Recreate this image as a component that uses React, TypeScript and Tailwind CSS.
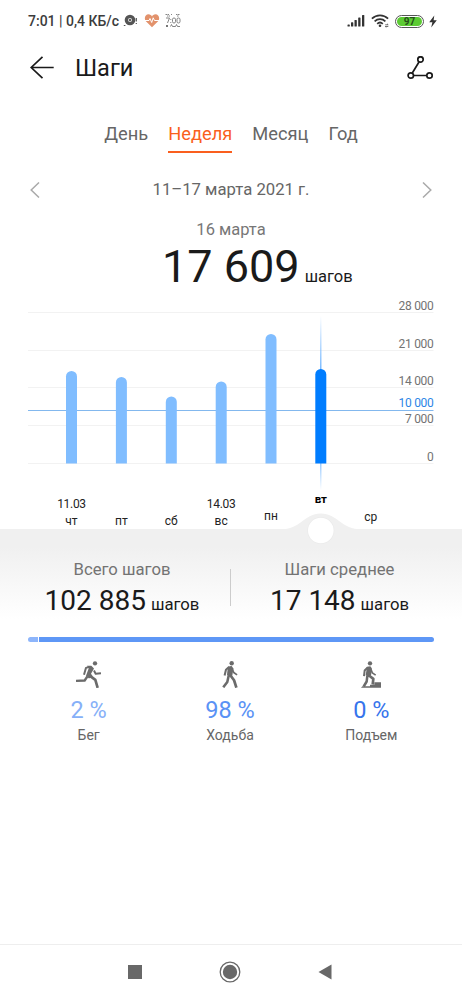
import React, { useState } from 'react';

interface DayItem {
  x: number;
  top: number | null;
  label: string;
  labelY: number;
  date?: string;
}

interface AxisItem {
  text: string;
  line: number;
  baseline: number;
}

const tabs = ['День', 'Неделя', 'Месяц', 'Год'];

// Chart coordinates are local to the 462x237 svg
const days: DayItem[] = [
  { x: 71.5, top: 79, label: 'чт', labelY: 232.5, date: '11.03' },
  { x: 121.4, top: 85, label: 'пт', labelY: 232.5 },
  { x: 171.3, top: 104.5, label: 'сб', labelY: 232.5 },
  { x: 221.2, top: 89.5, label: 'вс', labelY: 232.5, date: '14.03' },
  { x: 271, top: 42, label: 'пн', labelY: 228 },
  { x: 320.8, top: 77, label: 'вт', labelY: 211 },
  { x: 370.7, top: null, label: 'ср', labelY: 229 },
];

const axis: AxisItem[] = [
  { text: '28 000', line: 20.5, baseline: 18 },
  { text: '21 000', line: 58.5, baseline: 55.5 },
  { text: '14 000', line: 95.5, baseline: 93 },
  { text: '7 000', line: 133.5, baseline: 131 },
  { text: '0', line: 171.5, baseline: 169 },
];

const StatusBar: React.FC = () => (
  <div className="flex h-10 items-center pt-0.5 pl-[28px] pr-[25px] text-[#3c3c3c]">
    <span className="text-[14px] font-medium leading-5 whitespace-pre">7:01 | 0,4 КБ/с</span>
    <svg className="ml-1 h-4 w-4" viewBox="0 0 16 16">
      <circle cx="7" cy="7" r="5.3" fill="#555" />
      <circle cx="7" cy="7" r="2" fill="#ddd" />
      <circle cx="7" cy="7" r="1" fill="#333" />
      <path d="M.8 12.5h1.6M13.3 5v3.5M13.3 10v1" stroke="#555" strokeWidth="1.2" />
    </svg>
    <svg className="ml-[5px] h-4 w-4" viewBox="0 0 16 16">
      <path d="M8 14.3 1.9 8.2C-.5 5.2 1.4 1.3 4.5 1.3 6.2 1.3 7.4 2.3 8 3.5 8.6 2.3 9.8 1.3 11.5 1.3c3.1 0 5 3.9 2.6 6.900z" fill="#e2926c" />
      <path d="M1 7.5h4l1-2 1.7 4 1.5-4.7 1.3 2.7H15" fill="none" stroke="#fff" />
    </svg>
    <svg className="ml-[5px] h-4 w-4" viewBox="0 0 16 16" fill="none" stroke="#777" strokeWidth=".9">
      <path d="M.5 1.5h4M6 1.5h1M11 1.5h4M2 3h3M12 3h2" strokeDasharray="1.5 .5" />
      <path d="M1 5h3.5L2.5 10M5.8 6v1M5.8 9v1" />
      <rect x="7.5" y="5" width="3" height="5" rx="1.4" />
      <rect x="12" y="5" width="3" height="5" rx="1.4" />
      <path d="M1 13h2" strokeWidth="2" />
      <path d="M5.5 13.5l1-2 1 2h3l1-2 1 2h2.5" />
    </svg>
    <div className="ml-auto flex items-center">
      <svg className="h-4 w-[18px]" viewBox="0 0 18 16" fill="#333">
        <rect x=".5" y="11.5" width="2.3" height="2" rx=".6" />
        <rect x="4" y="9.3" width="2.3" height="4.2" rx=".6" />
        <rect x="7.5" y="7" width="2.3" height="6.5" rx=".6" />
        <rect x="11.2" y="4.5" width="2.3" height="9" rx=".6" />
        <rect x="15" y="2" width="2.3" height="11.5" rx=".6" />
      </svg>
      <svg className="ml-[6px] h-4 w-[19px]" viewBox="0 0 19 16" fill="none" stroke="#333" strokeWidth="1.7">
        <path d="M.9 5.6c4.6-4.4 11.6-4.4 16.2 0" />
        <path d="M3.6 8.3c3.1-3 7.7-3 10.8 0" />
        <path d="M6.2 10.8c1.6-1.5 4-1.5 5.6 0" />
        <circle cx="9" cy="12.8" r="1.3" fill="#333" stroke="none" />
        <path d="M14.2 11.8h3l-1-.9M17.3 13.5h-3l1 .9" strokeWidth=".7" />
      </svg>
      <div className="ml-[5px] flex h-[13px] w-[29px] rounded-full border border-[#555] p-px">
        <div className="flex flex-1 items-center justify-center rounded-full bg-[#5ccb33] pt-px text-[10px] font-bold leading-none text-[#24501a]">
          97
        </div>
      </div>
      <svg className="ml-[5px] h-[13px] w-2" viewBox="0 0 8 13" fill="#333">
        <path d="M5.3.4.2 7.3h3.2L2.2 12.6 7.8 5.3H4.6z" />
      </svg>
    </div>
  </div>
);

const StepsChart: React.FC = () => (
  <svg className="relative block h-[237px] w-[462px] shrink-0 overflow-visible text-[12px]" viewBox="0 0 462 237">
    <defs>
      <linearGradient id="marker" x1="0" y1="0" x2="0" y2="1">
        <stop offset="0" stopColor="#7dbcff" stopOpacity="0" />
        <stop offset=".3" stopColor="#7dbcff" />
        <stop offset=".8" stopColor="#7dbcff" />
        <stop offset="1" stopColor="#7dbcff" stopOpacity="0" />
      </linearGradient>
    </defs>
    {axis.map((item) => (
      <g key={item.text}>
        <path d={`M28 ${item.line}H433.5`} stroke="#f2f2f2" />
        <text x="433.5" y={item.baseline} textAnchor="end" fill="#737373" className="tracking-[-0.3px]">
          {item.text}
        </text>
      </g>
    ))}
    <path d="M28 118.500H433.500" stroke="#83b8ee" />
    <text x="433.5" y="115" textAnchor="end" fill="#2c85e6" className="tracking-[-0.3px]">
      10 000
    </text>
    <rect x="320" y="24" width="1.5" height="174" fill="url(#marker)" />
    {days.map((day) => (
      <g key={day.label}>
        {day.top !== null && (
          <path
            d={`M${day.x - 5.5} 171.5V${day.top + 5.5}a5.5 5.5 0 0 1 11 0V171.5z`}
            fill={day.label === 'вт' ? '#007dff' : '#80bdff'}
          />
        )}
        {day.date && (
          <text x={day.x} y="215.5" textAnchor="middle" fill="#222" className="tracking-[-0.3px]">
            {day.date}
          </text>
        )}
        <text
          x={day.x}
          y={day.labelY}
          textAnchor="middle"
          fill={day.label === 'вт' ? '#000' : '#222'}
          className={day.label === 'вт' ? 'text-[11.5px] font-bold' : ''}
        >
          {day.label}
        </text>
      </g>
    ))}
    {/* Slider bump and handle */}
    <path d="M280 237.500C301 237.500 304 221.500 320.800 221.500S341 237.500 362 237.500z" fill="#f0f0f0" />
    <circle cx="320.8" cy="238.5" r="13.6" fill="#ebebeb" />
    <circle cx="320.8" cy="238.5" r="12.8" fill="#fff" />
  </svg>
);

const RunIcon: React.FC = () => (
  <svg className="h-[27px] w-[25px]" viewBox="0 0 75 80" fill="none" stroke="#6b6b6b" strokeLinejoin="round">
    <circle cx="57" cy="6.5" r="6.5" fill="#6b6b6b" stroke="none" />
    <path d="M33 14 46 14 54 22 45 38 50 45 39 52 30 44 38 22z" fill="#6b6b6b" stroke="none" />
    <path d="M40 17 30 20 24 41" strokeWidth="6" />
    <path d="M54 28 59 38 75 36" strokeWidth="6" />
    <path d="M34 46 26 58 0 59" strokeWidth="7" />
    <path d="M42 44 58 56 65 80" strokeWidth="8" />
  </svg>
);

const WalkIcon: React.FC = () => (
  <svg className="h-[27px] w-[16px]" viewBox="0 0 46 80" fill="none" stroke="#6b6b6b" strokeLinejoin="round">
    <circle cx="28" cy="6.5" r="6.5" fill="#6b6b6b" stroke="none" />
    <path d="M17 16 28 15 33 22 30 42 25 48 14 42z" fill="#6b6b6b" stroke="none" />
    <path d="M20 18 11 26 7 43" strokeWidth="6" />
    <path d="M30 24 34 34 44 41" strokeWidth="5" />
    <path d="M19 44 15 62 3 78" strokeWidth="7.5" />
    <path d="M24 42 35 57 42 79" strokeWidth="8" />
  </svg>
);

const ClimbIcon: React.FC = () => (
  <svg className="h-[27px] w-[20px]" viewBox="0 0 60 80" fill="none" stroke="#6b6b6b" strokeLinejoin="round">
    <circle cx="27" cy="6.5" r="6.5" fill="#6b6b6b" stroke="none" />
    <path d="M18 17 28 15 33 22 30 42 22 48 14 42z" fill="#6b6b6b" stroke="none" />
    <path d="M20 19 11 28 9 45" strokeWidth="6" />
    <path d="M30 25 34 35 44 42" strokeWidth="5" />
    <path d="M24 43 37 53 35 70" strokeWidth="8" />
    <path d="M19 44 17 61 8 76" strokeWidth="7.5" />
    <path d="M0 80 4 75H27V71H40V63H60V80z" fill="#6b6b6b" stroke="none" />
  </svg>
);

const activities = [
  { label: 'Бег', value: '2 %', icon: <RunIcon />, color: 'text-[#86b0f8]' },
  { label: 'Ходьба', value: '98 %', icon: <WalkIcon />, color: 'text-[#5a92f5]' },
  { label: 'Подъем', value: '0 %', icon: <ClimbIcon />, color: 'text-[#3674ec]' },
];

const App: React.FC = () => {
  const [activeTab, setActiveTab] = useState('Неделя');

  return (
    <div className="flex h-[1000px] w-[462px] flex-col overflow-hidden bg-white font-[Roboto,sans-serif] text-[#1a1a1a]">
      <StatusBar />

      <header className="flex h-14 items-center pl-[30px] pr-[29px]">
        <svg className="h-6 w-6" viewBox="0 0 24 24" fill="none" stroke="#1a1a1a" strokeWidth="1.7">
          <path d="M12.5.8 1.2 11.5 12.5 22.2M1.2 11.5H23.7" />
        </svg>
        <h1 className="ml-[21px] text-[23.5px] leading-8">Шаги</h1>
        <svg className="ml-auto h-[25px] w-[27px]" viewBox="0 0 27 25" fill="none" stroke="#1a1a1a" strokeWidth="1.7">
          <circle cx="14.5" cy="3.5" r="2.7" />
          <circle cx="4.8" cy="19.5" r="2.7" />
          <circle cx="23.5" cy="19.5" r="2.7" />
          <path d="M13 6 6.3 17M7.6 19.5h13" />
        </svg>
      </header>

      <nav className="flex justify-center gap-5 pt-[26px]">
        {tabs.map((tab) => (
          <button
            key={tab}
            onClick={() => setActiveTab(tab)}
            className={`border-b-2 pb-[5px] text-[18.3px] leading-6 ${
              activeTab === tab ? 'border-[#fa5f1e] text-[#fa5f1e]' : 'border-transparent text-[#666]'
            }`}
          >
            {tab}
          </button>
        ))}
      </nav>

      <div className="mt-[22px] flex h-[30px] shrink-0 items-center justify-between px-[30px] text-[#666]">
        <svg className="h-4 w-[10px]" viewBox="0 0 10 16" fill="none" stroke="#aaa" strokeWidth="1.5">
          <path d="M9 .5 1.2 8 9 15.5" />
        </svg>
        <span className="text-[16.7px]">11–17 марта 2021 г.</span>
        <svg className="h-4 w-[10px]" viewBox="0 0 10 16" fill="none" stroke="#aaa" strokeWidth="1.5">
          <path d="M1 .5 8.8 8 1 15.5" />
        </svg>
      </div>

      <p className="mt-[13px] text-center text-[16.5px] leading-6 text-[#777]">16 марта</p>
      <div className="flex h-[50px] shrink-0 items-baseline pl-[162px] leading-[50px]">
        <span className="text-[45px]">17 609</span>
        <span className="ml-[5px] text-[16.5px]">шагов</span>
      </div>

      <StepsChart />

      <section className="flex h-[90px] shrink-0 bg-linear-to-b from-[#f0f0f0] from-20% to-white pt-[29px]">
        <div className="flex w-[230px] flex-col items-center pl-[14px]">
          <p className="text-[16.7px] leading-6 text-[#737373]">Всего шагов</p>
          <p className="mt-px text-[28px] leading-9">
            102 885 <span className="-ml-[2px] text-[16.7px]">шагов</span>
          </p>
        </div>
        <div className="mt-[11px] h-[37px] w-px bg-[#ccc]" />
        <div className="flex flex-1 flex-col items-center pr-[14px]">
          <p className="text-[16.7px] leading-6 text-[#737373]">Шаги среднее</p>
          <p className="mt-px text-[28px] leading-9">
            17 148 <span className="-ml-[2px] text-[16.7px]">шагов</span>
          </p>
        </div>
      </section>

      <div className="mx-[28px] mt-[17.5px] flex h-[5px] shrink-0 gap-px overflow-hidden rounded-full">
        <div className="w-[10px] bg-[#8db5fb]" />
        <div className="flex-1 bg-[#5e97f6]" />
      </div>

      <section className="mt-[19.5px] grid grid-cols-3 pl-[18px] pr-[20px]">
        {activities.map((item) => (
          <div key={item.label} className="flex flex-col items-center">
            {item.icon}
            <span className={`mt-2 text-[23.5px] leading-7 ${item.color}`}>{item.value}</span>
            <span className="mt-px text-[14px] leading-5 text-[#666]">{item.label}</span>
          </div>
        ))}
      </section>

      <footer className="mt-auto flex h-14 items-center justify-between border-t border-[#eee] pb-0.5 pl-[128px] pr-[130px]">
        <div className="h-[14px] w-[14px] bg-[#686868]" />
        <svg className="h-[22px] w-[22px]" viewBox="0 0 22 22">
          <circle cx="11" cy="11" r="9.8" fill="none" stroke="#686868" strokeWidth="1.3" />
          <circle cx="11" cy="11" r="7.2" fill="#686868" />
        </svg>
        <svg className="h-4 w-[14px]" viewBox="0 0 14 16">
          <path d="M13.5.5v15L.5 8z" fill="#686868" />
        </svg>
      </footer>
    </div>
  );
};

export default App;
